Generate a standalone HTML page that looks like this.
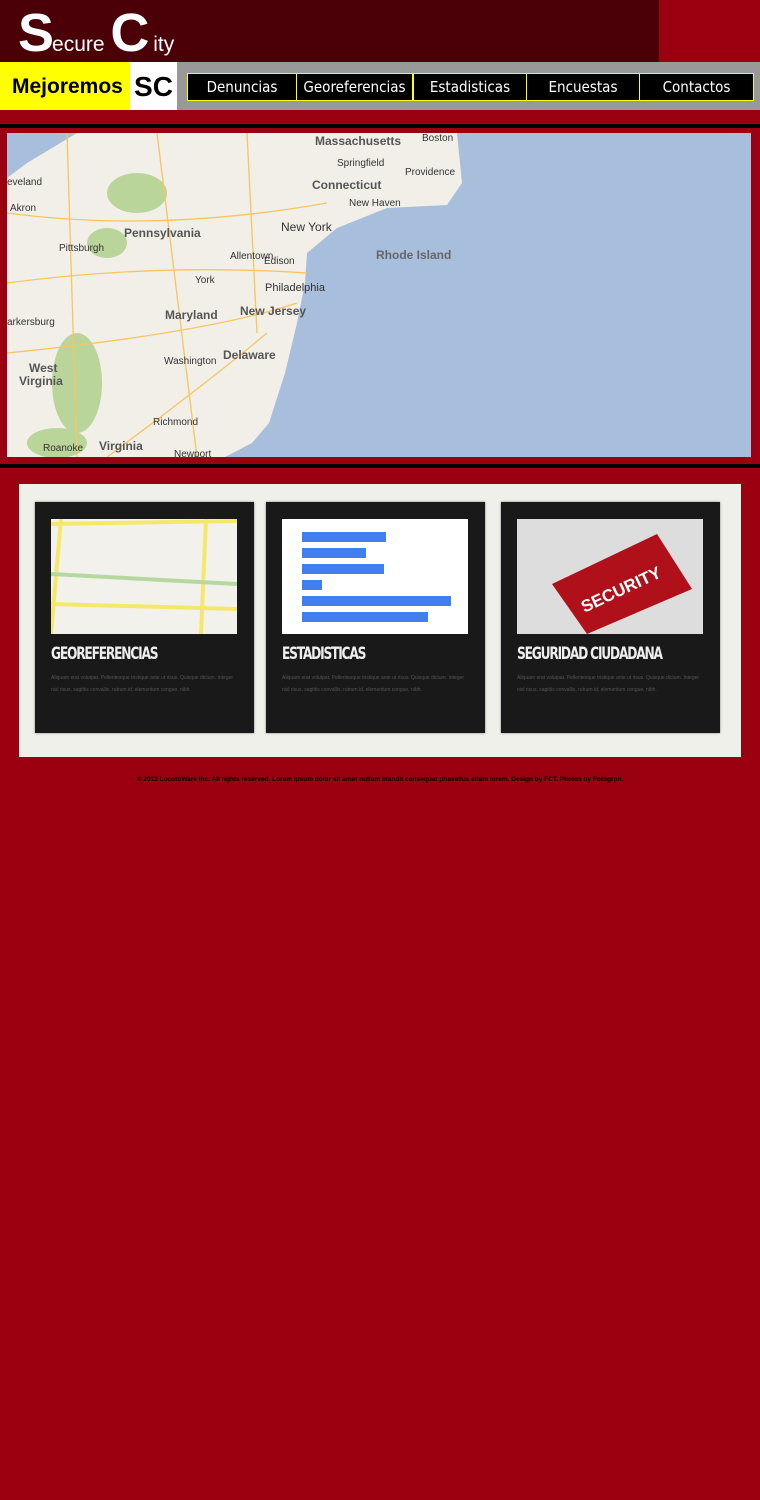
<!DOCTYPE html>
<html><head><meta charset="utf-8"><style>
*{margin:0;padding:0;box-sizing:border-box}
body{width:760px;height:1500px;background:#9a000f;font-family:"Liberation Sans",sans-serif;position:relative;overflow:hidden}
.abs{position:absolute}
.top{left:0;top:0;width:659px;height:62px;background:#4a0006}
.logo{left:18px;top:2px;color:#fff;font-family:"Liberation Sans",sans-serif;white-space:nowrap}
.logo .b{font-size:54px;font-weight:bold;letter-spacing:-2px}
.logo .s{font-size:21px}
.yel{left:0;top:62px;width:130px;height:48px;background:#ff0;font-weight:bold;font-size:21px;line-height:50px;padding-left:12px;font-family:"Liberation Sans",sans-serif}
.wh{left:130px;top:62px;width:47px;height:48px;background:#fff;font-weight:bold;font-size:28px;line-height:50px;text-align:center;font-family:"Liberation Sans",sans-serif}
.gray{left:177px;top:62px;width:583px;height:48px;background:#999}
.btn{top:73px;height:28px;background:#000;border:1px solid #ff0;color:#fff;font-size:15px;line-height:26px;text-align:center;font-family:"DejaVu Sans Condensed",sans-serif}
.bl{left:0;width:760px;height:4px;background:#000}
.panel{left:19px;top:484px;width:722px;height:273px;background:#f0f0ea}
.card{top:502px;width:219px;height:231px;background:#191919;box-shadow:0 0 2px #777}
.img{position:absolute;left:16px;top:17px;width:186px;height:115px;overflow:hidden}
.ct{position:absolute;left:16px;top:142px;color:#eee;font-family:"DejaVu Sans Condensed",sans-serif;font-size:17px;letter-spacing:-1.5px;font-weight:bold;transform:scaleX(0.8);transform-origin:left}
.cp{position:absolute;left:16px;top:170px;width:188px;color:#555;font-size:5px;line-height:12px}
.foot{left:0;top:776px;width:760px;text-align:center;font-size:6.5px;font-weight:bold;color:#000}
</style></head><body>
<div class="abs top"></div>
<div class="abs logo"><span class="b">S</span><span class="s">ecure </span><span class="b">C</span><span class="s"> ity</span></div>
<div class="abs yel">Mejoremos</div>
<div class="abs wh">SC</div>
<div class="abs gray"></div>
<div class="abs btn" style="left:187px;width:110px">Denuncias</div>
<div class="abs btn" style="left:296px;width:117px">Georeferencias</div>
<div class="abs btn" style="left:413px;width:114px">Estadisticas</div>
<div class="abs btn" style="left:526px;width:114px">Encuestas</div>
<div class="abs btn" style="left:639px;width:115px">Contactos</div>
<div class="abs bl" style="top:124px"></div>
<svg class="abs" style="left:7px;top:133px" width="744" height="324" font-family="Liberation Sans" font-weight="bold">
<rect width="744" height="324" fill="#a7bfdd"/>
<polygon points="0,0 450,0 455,50 440,72 380,75 330,95 300,120 298,150 290,190 278,240 262,290 245,310 218,324 0,324" fill="#f1efe8"/>
<polygon points="0,0 70,0 20,30 0,45" fill="#a7bfdd"/>
<g fill="#b9d59a"><ellipse cx="130" cy="60" rx="30" ry="20"/><ellipse cx="70" cy="250" rx="25" ry="50"/><ellipse cx="100" cy="110" rx="20" ry="15"/><ellipse cx="50" cy="310" rx="30" ry="15"/></g>
<g stroke="#f7c560" stroke-width="1.3" fill="none"><path d="M0,150 Q150,130 300,140"/><path d="M60,0 L70,324"/><path d="M0,80 Q150,100 320,70"/><path d="M150,0 L190,324"/><path d="M0,220 Q200,200 290,170"/><path d="M240,0 L250,200"/><path d="M100,324 Q200,250 260,200"/></g>
<g fill="#555" font-size="12"><text x="308" y="12">Massachusetts</text><text x="305" y="56">Connecticut</text><text x="117" y="104">Pennsylvania</text><text x="369" y="126" fill="#666">Rhode Island</text><text x="158" y="186">Maryland</text><text x="233" y="182">New Jersey</text><text x="216" y="226">Delaware</text><text x="22" y="239">West</text><text x="12" y="252">Virginia</text><text x="92" y="317">Virginia</text></g>
<g fill="#333" font-size="10" font-weight="normal"><text x="415" y="8">Boston</text><text x="330" y="33">Springfield</text><text x="398" y="42">Providence</text><text x="342" y="73">New Haven</text><text x="274" y="98" font-size="12">New York</text><text x="52" y="118">Pittsburgh</text><text x="223" y="126">Allentown</text><text x="257" y="131">Edison</text><text x="188" y="150">York</text><text x="258" y="158" font-size="11">Philadelphia</text><text x="0" y="192">arkersburg</text><text x="157" y="231">Washington</text><text x="146" y="292">Richmond</text><text x="36" y="318">Roanoke</text><text x="167" y="324">Newport</text><text x="0" y="52">eveland</text><text x="3" y="78">Akron</text></g>
</svg>
<div class="abs bl" style="top:464px"></div>
<div class="abs panel"></div>
<div class="abs card" style="left:35px"><div class="img" style="background:#f3f1ec"><svg width="186" height="115"><path d="M10,0 L0,115 M155,0 L150,115 M0,85 L186,90 M0,5 L186,2" stroke="#f4e86b" stroke-width="4"/><path d="M0,55 L186,65" stroke="#b5d8a0" stroke-width="4"/></svg></div><div class="ct">GEOREFERENCIAS</div><div class="cp">Aliquam erat volutpat. Pellentesque tristique ante ut risus. Quisque dictum. Integer nisl risus, sagittis convallis, rutrum id, elementum congue, nibh.</div></div>
<div class="abs card" style="left:266px"><div class="img" style="background:#fff"><svg width="186" height="115"><g fill="#3f7fee"><rect x="20" y="13" width="84" height="10"/><rect x="20" y="29" width="64" height="10"/><rect x="20" y="45" width="82" height="10"/><rect x="20" y="61" width="20" height="10"/><rect x="20" y="77" width="149" height="10"/><rect x="20" y="93" width="126" height="10"/></g></svg></div><div class="ct">ESTADISTICAS</div><div class="cp">Aliquam erat volutpat. Pellentesque tristique ante ut risus. Quisque dictum. Integer nisl risus, sagittis convallis, rutrum id, elementum congue, nibh.</div></div>
<div class="abs card" style="left:501px"><div class="img" style="background:#ddd"><svg width="186" height="115"><polygon points="35,65 140,15 175,70 70,115" fill="#b0101a"/><text x="60" y="80" fill="#fff" font-size="17" font-weight="bold" transform="rotate(-25 95 70)">SECURITY</text></svg></div><div class="ct">SEGURIDAD CIUDADANA</div><div class="cp">Aliquam erat volutpat. Pellentesque tristique ante ut risus. Quisque dictum. Integer nisl risus, sagittis convallis, rutrum id, elementum congue, nibh.</div></div>
<div class="abs foot">© 2012 LocotoWare Inc. All rights reserved. Lorem ipsum dolor sit amet nullam blandit consequat phasellus etiam lorem. Design by FCT. Photos by Fotogrph.</div>
</body></html>
